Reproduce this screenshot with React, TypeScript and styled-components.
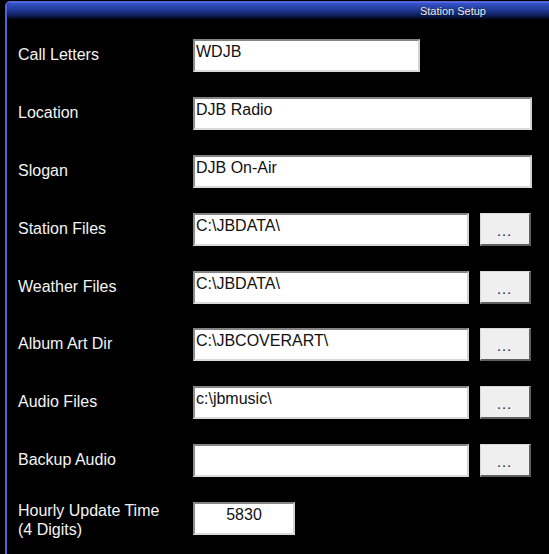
import styled, { createGlobalStyle } from "styled-components";

const GlobalStyle = createGlobalStyle`
html, body {
margin: 0;
padding: 0;
background: #000;
}
body {
font-family: "Liberation Sans", Arial, sans-serif;
}
`;

const Window = styled.div`
margin: 1px 0 0 5px;
height: 553px;
border-left: 2px solid #5c5cd6;
border-top: 2px solid #5566dd;
border-top-left-radius: 5px;
background: #000;
box-sizing: border-box;
overflow: hidden;
`;

const TitleBar = styled.div`
height: 17px;
display: flex;
align-items: center;
justify-content: flex-end;
padding-right: 63px;
background: linear-gradient(to bottom, #3453cc 0%, #233e9e 35%, #102060 70%, #000 100%);
`;

const Title = styled.span`
font-size: 11px;
color: #f2f2f2;
text-shadow: 0 0 1px #000;
margin-top: -1px;
`;

const Form = styled.div`
display: flex;
flex-direction: column;
gap: 24.875px;
padding: 19px 0 0 11px;
`;

const Row = styled.div`
display: flex;
align-items: center;
height: 33px;
`;

const Label = styled.div<{ $shift?: number }>`
width: 175px;
flex-shrink: 0;
margin-top: ${(p) => p.$shift ?? -2}px;
font-size: 16px;
line-height: 19px;
color: #f4f4f4;
`;

const Field = styled.div<{ $width: number; $center?: boolean }>`
width: ${(p) => p.$width}px;
height: 33px;
box-sizing: border-box;
background: #fff;
border-top: 2px solid #858585;
border-left: 2px solid #8c8c8c;
border-right: 2px solid #d2d2d2;
border-bottom: 2px solid #dadada;
padding: 2px 2px 0 ${(p) => (p.$center ? 2 : 1)}px;
font-size: 16px;
line-height: 18px;
color: #111;
text-align: ${(p) => (p.$center ? "center" : "left")};
white-space: nowrap;
overflow: hidden;
`;

const BrowseButton = styled.button`
width: 51px;
height: 33px;
margin-left: 11px;
box-sizing: border-box;
background: #efefef;
border-top: 1px solid #d8d8d8;
border-left: 1px solid #d8d8d8;
border-right: 2px solid #5f5f5f;
border-bottom: 2px solid #5f5f5f;
padding: 6px 0 0 0;
font-family: "Liberation Sans", Arial, sans-serif;
font-size: 11px;
font-weight: bold;
letter-spacing: 2px;
color: #2a3a58;
cursor: pointer;
`;

type Setting = { label: string; value: string; width: number; browse?: boolean };

const settings: Setting[] = [
  { label: "Call Letters", value: "WDJB", width: 227 },
  { label: "Location", value: "DJB Radio", width: 339 },
  { label: "Slogan", value: "DJB On-Air", width: 339 },
  { label: "Station Files", value: "C:\\JBDATA\\", width: 276, browse: true },
  { label: "Weather Files", value: "C:\\JBDATA\\", width: 276, browse: true },
  { label: "Album Art Dir", value: "C:\\JBCOVERART\\", width: 276, browse: true },
  { label: "Audio Files", value: "c:\\jbmusic\\", width: 276, browse: true },
  { label: "Backup Audio", value: "", width: 276, browse: true },
];

export default function App() {
  return (
    <>
      <GlobalStyle />
      <Window>
        <TitleBar>
          <Title>Station Setup</Title>
        </TitleBar>
        <Form>
          {settings.map((s) => (
            <Row key={s.label}>
              <Label>{s.label}</Label>
              <Field $width={s.width}>{s.value}</Field>
              {s.browse && <BrowseButton>...</BrowseButton>}
            </Row>
          ))}
          <Row>
            <Label $shift={3}>
              Hourly Update Time
              <br />
              (4 Digits)
            </Label>
            <Field $width={102} $center>
              5830
            </Field>
          </Row>
        </Form>
      </Window>
    </>
  );
}
